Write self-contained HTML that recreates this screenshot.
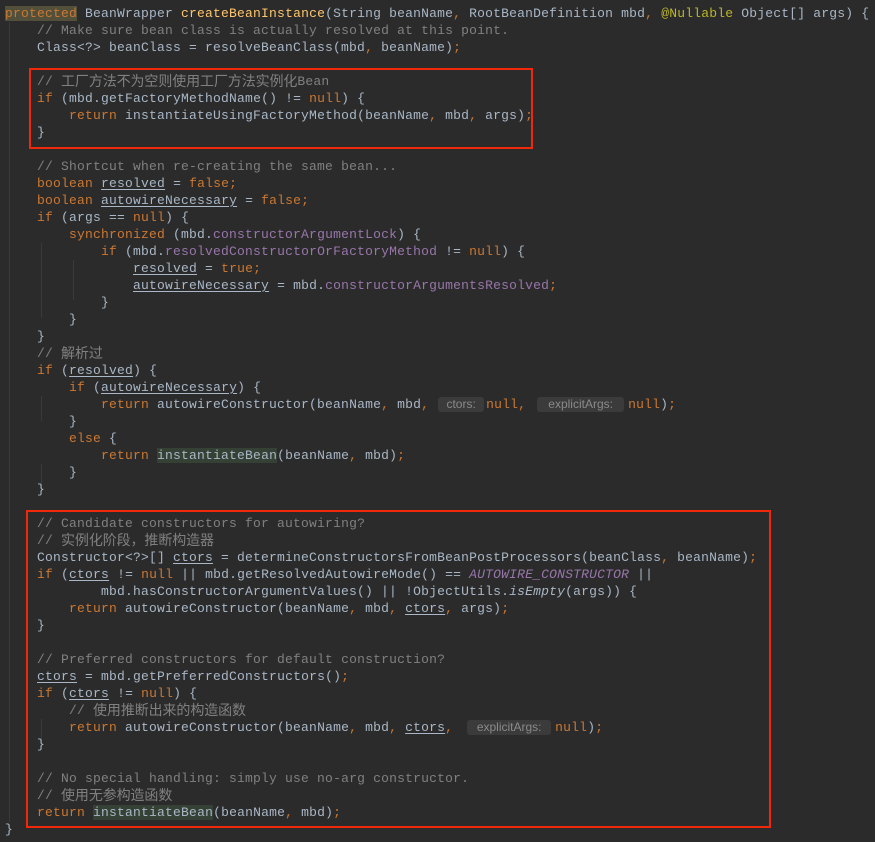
<!DOCTYPE html>
<html><head><meta charset="utf-8"><style>
html,body{margin:0;padding:0;background:#2b2b2b;width:875px;height:842px;overflow:hidden;position:relative}
pre{margin:0;position:absolute;left:5px;top:5px;font-family:"Liberation Mono",monospace;font-size:13px;line-height:17px;letter-spacing:0.2px;color:#a9b7c6}
.k{color:#cc7832}.c{color:#808080}.m{color:#ffc66d}.f{color:#9876aa}.a{color:#bbb529}.i{font-style:italic}
.u{text-decoration:underline;text-underline-offset:2px}
.z{font-family:"Noto Sans CJK SC",sans-serif;font-size:14px;letter-spacing:-0.1px;line-height:0;vertical-align:-1px}
.h{background:#344134}
.p{background:#52503a}
.hint{display:inline-block;box-sizing:border-box;text-align:center;font-family:"Liberation Sans",sans-serif;font-size:12px;line-height:15px;color:#8a8a8a;background:#3b3b3b;border-radius:3px;letter-spacing:0;vertical-align:0px}
.box{position:absolute;border:2px solid #f2280a}
.g{position:absolute;width:1px;background:#3a3a3a}
</style></head><body>
<div class="g" style="left:9px;top:22px;height:800px"></div>
<div class="g" style="left:41px;top:125px;height:10px"></div>
<div class="g" style="left:41px;top:243px;height:75px"></div>
<div class="g" style="left:73px;top:260px;height:40px"></div>
<div class="g" style="left:41px;top:396px;height:25px"></div>
<div class="g" style="left:41px;top:464px;height:25px"></div>
<div class="g" style="left:41px;top:719px;height:25px"></div>
<div style="position:absolute;left:14px;top:-11px;color:#629755;font:13px 'Liberation Mono',monospace">*/</div>
<pre><span class="k p">protected</span> BeanWrapper <span class="m">createBeanInstance</span>(String beanName<span class="k">,</span> RootBeanDefinition mbd<span class="k">,</span> <span class="a">@Nullable</span> Object[] args) {
    <span class="c">// Make sure bean class is actually resolved at this point.</span>
    Class&lt;?&gt; beanClass = resolveBeanClass(mbd<span class="k">,</span> beanName)<span class="k">;</span>

    <span class="c">// <span class="z">工厂方法不为空则使用工厂方法实例化</span>Bean</span>
    <span class="k">if</span> (mbd.getFactoryMethodName() != <span class="k">null</span>) {
        <span class="k">return</span> instantiateUsingFactoryMethod(beanName<span class="k">,</span> mbd<span class="k">,</span> args)<span class="k">;</span>
    }

    <span class="c">// Shortcut when re-creating the same bean...</span>
    <span class="k">boolean</span> <span class="u">resolved</span> = <span class="k">false;</span>
    <span class="k">boolean</span> <span class="u">autowireNecessary</span> = <span class="k">false;</span>
    <span class="k">if</span> (args == <span class="k">null</span>) {
        <span class="k">synchronized</span> (mbd.<span class="f">constructorArgumentLock</span>) {
            <span class="k">if</span> (mbd.<span class="f">resolvedConstructorOrFactoryMethod</span> != <span class="k">null</span>) {
                <span class="u">resolved</span> = <span class="k">true;</span>
                <span class="u">autowireNecessary</span> = mbd.<span class="f">constructorArgumentsResolved</span><span class="k">;</span>
            }
        }
    }
    <span class="c">// <span class="z">解析过</span></span>
    <span class="k">if</span> (<span class="u">resolved</span>) {
        <span class="k">if</span> (<span class="u">autowireNecessary</span>) {
            <span class="k">return</span> autowireConstructor(beanName<span class="k">,</span> mbd<span class="k">,</span><span class="hint" style="width:46px;margin-left:9px;margin-right:2px">ctors:</span><span class="k">null,</span><span class="hint" style="width:87px;margin-left:11px;margin-right:4px">explicitArgs:</span><span class="k">null</span>)<span class="k">;</span>
        }
        <span class="k">else</span> {
            <span class="k">return</span> <span class="h">instantiateBean</span>(beanName<span class="k">,</span> mbd)<span class="k">;</span>
        }
    }

    <span class="c">// Candidate constructors for autowiring?</span>
    <span class="c">// <span class="z">实例化阶段，推断构造器</span></span>
    Constructor&lt;?&gt;[] <span class="u">ctors</span> = determineConstructorsFromBeanPostProcessors(beanClass<span class="k">,</span> beanName)<span class="k">;</span>
    <span class="k">if</span> (<span class="u">ctors</span> != <span class="k">null</span> || mbd.getResolvedAutowireMode() == <span class="f i">AUTOWIRE_CONSTRUCTOR</span> ||
            mbd.hasConstructorArgumentValues() || !ObjectUtils.<span class="i">isEmpty</span>(args)) {
        <span class="k">return</span> autowireConstructor(beanName<span class="k">,</span> mbd<span class="k">,</span> <span class="u">ctors</span><span class="k">,</span> args)<span class="k">;</span>
    }

    <span class="c">// Preferred constructors for default construction?</span>
    <span class="u">ctors</span> = mbd.getPreferredConstructors()<span class="k">;</span>
    <span class="k">if</span> (<span class="u">ctors</span> != <span class="k">null</span>) {
        <span class="c">// <span class="z">使用推断出来的构造函数</span></span>
        <span class="k">return</span> autowireConstructor(beanName<span class="k">,</span> mbd<span class="k">,</span> <span class="u">ctors</span><span class="k">,</span><span class="hint" style="width:84px;margin-left:14px;margin-right:4px">explicitArgs:</span><span class="k">null</span>)<span class="k">;</span>
    }

    <span class="c">// No special handling: simply use no-arg constructor.</span>
    <span class="c">// <span class="z">使用无参构造函数</span></span>
    <span class="k">return</span> <span class="h">instantiateBean</span>(beanName<span class="k">,</span> mbd)<span class="k">;</span>
}</pre>
<div class="box" style="left:29px;top:68px;width:500px;height:77px"></div>
<div class="box" style="left:26px;top:510px;width:741px;height:314px"></div>
</body></html>
